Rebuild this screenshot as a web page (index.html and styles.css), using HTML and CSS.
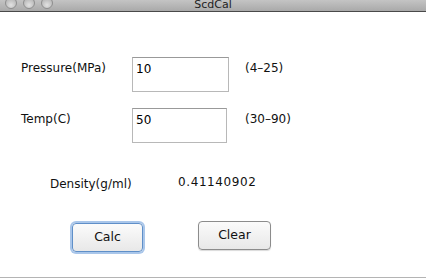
FILE: index.html
```html
<!DOCTYPE html>
<html lang="en">
<head>
    <meta charset="UTF-8">
    <title>ScdCal</title>
    <link rel="stylesheet" href="styles.css">
</head>
<body>
    <div class="titlebar">
        <div class="lights">
            <span class="light"></span>
            <span class="light"></span>
            <span class="light"></span>
        </div>
        <div class="title">ScdCal</div>
    </div>
    <div class="window">
        <div class="row">
            <label class="label" for="pressure">Pressure(MPa)</label>
            <input class="field" type="text" id="pressure" value="10">
            <span class="hint">(4–25)</span>
        </div>
        <div class="row">
            <label class="label" for="temp">Temp(C)</label>
            <input class="field field-short" type="text" id="temp" value="50">
            <span class="hint">(30–90)</span>
        </div>
        <div class="result">
            <span class="result-label">Density(g/ml)</span>
            <span class="result-value">0.41140902</span>
        </div>
        <div class="buttons">
            <button class="btn btn-default">Calc</button>
            <button class="btn">Clear</button>
        </div>
    </div>
</body>
</html>
```

FILE: styles.css
```css
body {
    margin: 0;
    background-color: #fff;
    font-family: "DejaVu Sans", sans-serif;
    font-size: 12px;
    color: #111;
    height: 279px;
    overflow: hidden;
}
.titlebar {
    height: 11px;
    border-bottom: 1px solid #4a4a4a;
    background: linear-gradient(#c4c4c4, #a9a9a9);
    position: relative;
    overflow: hidden;
}
.lights {
    display: flex;
    gap: 6px;
    padding-left: 5px;
    margin-top: -3px;
}
.light {
    width: 12px;
    height: 12px;
    border-radius: 50%;
    background: radial-gradient(circle at 50% 70%, #e2e2e2, #a8a8a8);
    border: 1px solid #8e8e8e;
    box-sizing: border-box;
}
.title {
    position: absolute;
    top: -1px;
    left: 0;
    right: 0;
    text-align: center;
    font-size: 11px;
    line-height: 12px;
    color: #222;
}
.window {
    box-sizing: border-box;
    height: 266px;
    padding-top: 45px;
    border-bottom: 1px solid #b4b4b4;
}
.row {
    display: flex;
    align-items: center;
    padding-left: 21px;
    margin-bottom: 16px;
}
.label {
    width: 111px;
    margin-top: -13px;
}
.field {
    width: 97px;
    height: 35px;
    box-sizing: border-box;
    border: 1px solid #b8b8b8;
    border-top-color: #999;
    padding: 0 0 12px 3px;
    font-family: inherit;
    font-size: 12px;
    color: #000;
    outline: none;
}
.field-short {
    width: 95px;
}
.hint {
    margin-left: 16px;
    margin-top: -13px;
}
.row:nth-child(2) .hint {
    margin-left: 18px;
}
.result {
    display: flex;
    padding-left: 50px;
    margin-top: 34px;
}
.result-label {
    width: 128px;
}
.result-value {
    margin-top: -2px;
    letter-spacing: 0.6px;
}
.buttons {
    display: flex;
    align-items: flex-start;
    padding-left: 72px;
    margin-top: 30px;
    gap: 55px;
}
.btn {
    width: 73px;
    height: 29px;
    font-family: inherit;
    font-size: 12.5px;
    color: #111;
    background: linear-gradient(#fbfbfb, #e8e8e8);
    border: 1px solid #8c8c8c;
    border-radius: 4px;
    box-shadow: 0 1px 1px rgba(0, 0, 0, 0.15);
    padding: 0 0 3px;
}
.btn-default {
    width: 71px;
    margin-top: 2px;
    border-color: #5f8fc8;
    box-shadow: 0 0 0 2px #a9c6ea;
}
```
